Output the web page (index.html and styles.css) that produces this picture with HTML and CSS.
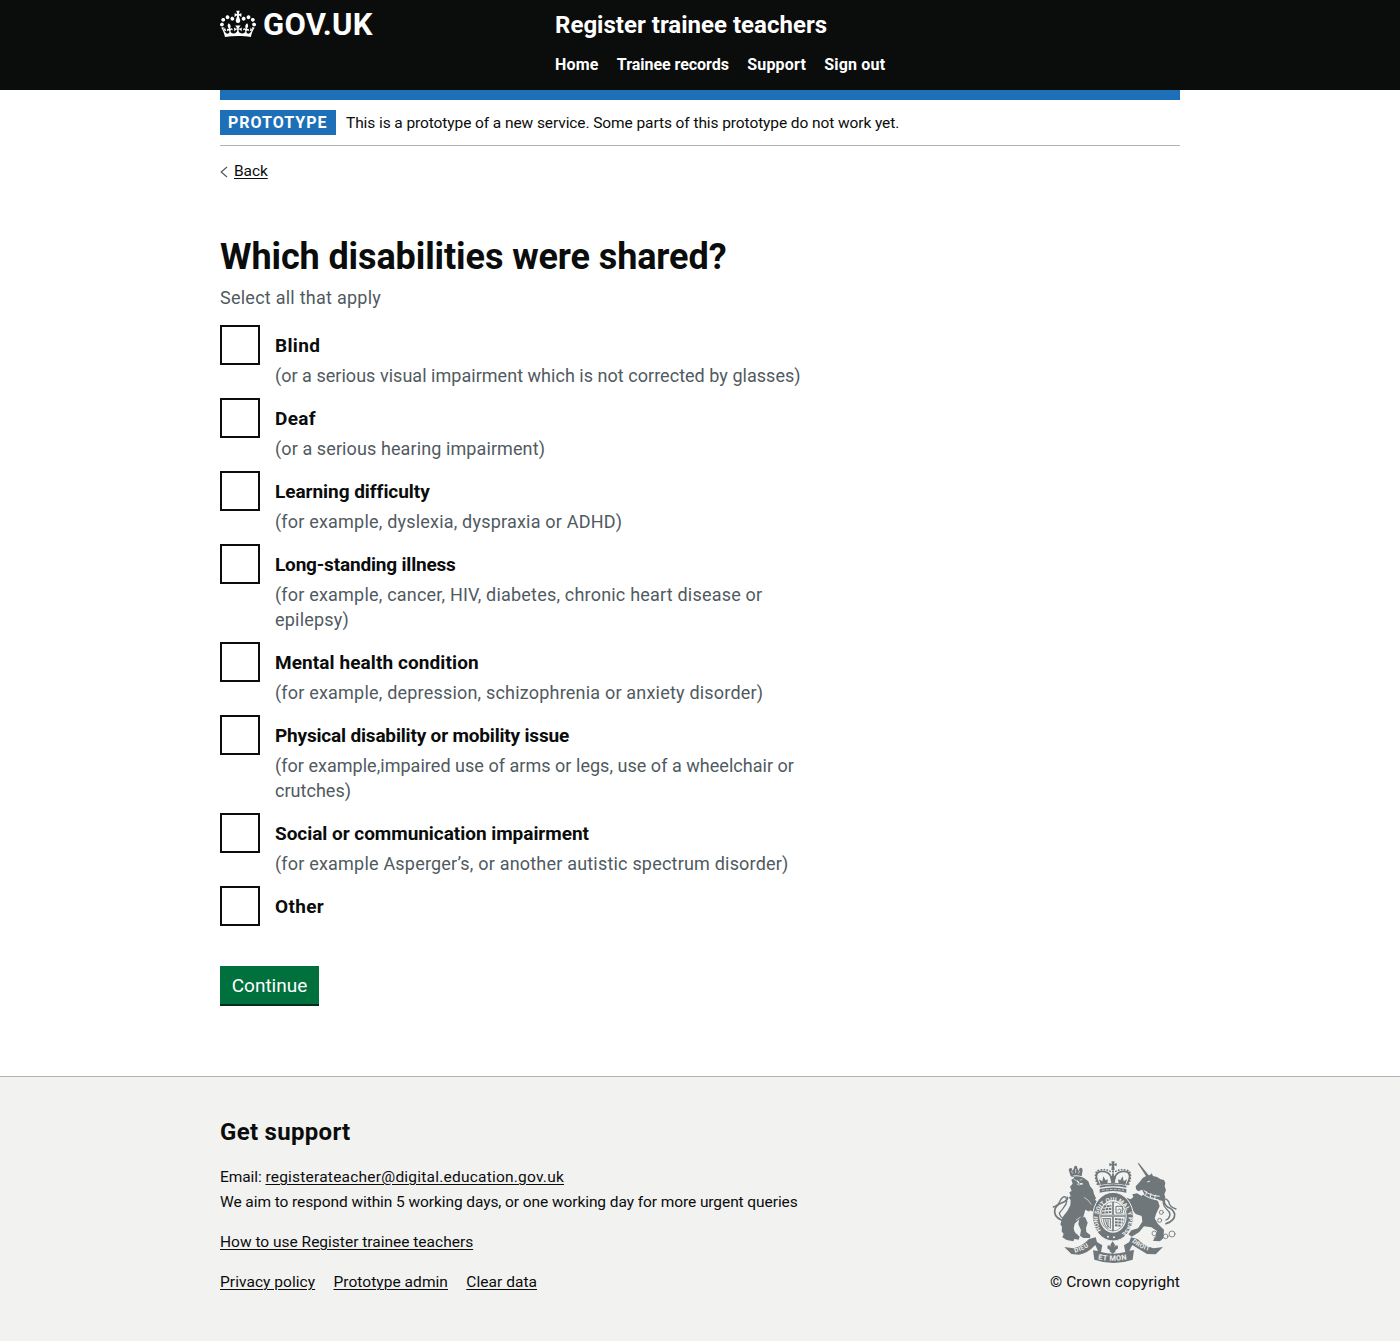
FILE: index.html
```html
<!DOCTYPE html>
<html lang="en">
<head>
<meta charset="utf-8">
<title>Which disabilities were shared? - Register trainee teachers - GOV.UK</title>
<link rel="stylesheet" href="styles.css">
</head>
<body>
<header class="header">
  <div class="width header-inner">
    <a class="logo" href="#">
      <svg class="crown" viewBox="0 0 132 97" width="36" height="30" aria-hidden="true"><path fill="currentColor" fill-rule="evenodd" d="M25 30.2c3.5 1.5 7.7-.2 9.1-3.7 1.5-3.6-.2-7.8-3.9-9.2-3.6-1.4-7.6.3-9.1 3.9-1.4 3.5.3 7.5 3.9 9zM9 39.5c3.6 1.5 7.8-.2 9.2-3.7 1.5-3.6-.2-7.8-3.9-9.1-3.6-1.5-7.6.2-9.1 3.8-1.4 3.5.3 7.5 3.8 9zM4.4 57.2c3.5 1.5 7.7-.2 9.1-3.8 1.5-3.6-.2-7.7-3.9-9.1-3.5-1.5-7.6.3-9.1 3.8-1.4 3.5.3 7.6 3.9 9.1zm38.3-21.4c3.5 1.5 7.7-.2 9.1-3.8 1.5-3.6-.2-7.7-3.9-9.1-3.6-1.5-7.6.3-9.1 3.8-1.3 3.6.4 7.7 3.9 9.1zm64.4-5.6c-3.6 1.5-7.8-.2-9.1-3.7-1.5-3.6.2-7.8 3.8-9.2 3.6-1.4 7.7.3 9.2 3.9 1.3 3.5-.4 7.5-3.9 9zm15.9 9.3c-3.6 1.5-7.7-.2-9.1-3.7-1.5-3.6.2-7.8 3.7-9.1 3.6-1.5 7.7.2 9.2 3.8 1.5 3.5-.3 7.5-3.8 9zm4.7 17.7c-3.6 1.5-7.8-.2-9.2-3.8-1.5-3.6.2-7.7 3.9-9.1 3.6-1.5 7.7.3 9.2 3.8 1.3 3.5-.4 7.6-3.9 9.1zM89.3 35.8c-3.6 1.5-7.8-.2-9.2-3.8-1.4-3.6.2-7.7 3.9-9.1 3.6-1.5 7.7.3 9.2 3.8 1.4 3.6-.3 7.7-3.9 9.1zM69.7 17.7l8.9 4.7V9.3l-8.9 2.8c-.2-.3-.5-.6-.9-.9L72.4 0H59.6l3.5 11.2c-.3.3-.6.5-.9.9l-8.8-2.8v13.1l8.8-4.7c.3.3.6.7.9.9l-5 15.4v.1c-.2.8-.4 1.6-.4 2.4 0 4.1 3.1 7.5 7 8.1h.2c.3 0 .7.1 1 .1.4 0 .7 0 1-.1h.2c4-.6 7.1-4.1 7.1-8.1 0-.8-.1-1.7-.4-2.4V34l-5.1-15.4c.4-.2.7-.6 1-.9zM66 92.8c16.9 0 32.8 1.1 47.1 3.2 4-16.9 8.9-26.7 14-33.5l-9.6-3.4c1 4.9 1.1 7.2 0 10.2-1.5-1.4-3-4.3-4.2-8.7L108.6 76c2.8-2 5-3.2 7.5-3.3-4.4 9.4-10 11.9-13.6 11.2-4.3-.8-6.3-4.6-5.6-7.9 1-4.7 5.7-5.9 8-.5 4.3-8.7-3-11.4-7.6-8.8 7.1-7.2 7.9-13.5 2.1-21.1-8 6.1-8.1 12.3-4.5 20.8-4.7-5.4-12.1-2.5-9.5 6.2 3.4-5.2 7.9-2 7.2 3.1-.6 4.3-6.4 7.8-13.5 7.2-10.3-.9-10.9-8-11.2-13.8 2.5-.5 7.1 1.8 11 7.3L80.2 60c-4.1 4.4-8 5.3-12.3 5.4 1.4-4.4 8-11.6 8-11.6H55.5s6.4 7.2 7.9 11.6c-4.2-.1-8-1-12.3-5.4l1.4 16.4c3.9-5.5 8.5-7.7 10.9-7.3-.3 5.8-.9 12.8-11.1 13.8-7.2.6-12.9-2.9-13.5-7.2-.7-5 3.8-8.3 7.1-3.1 2.7-8.7-4.6-11.6-9.4-6.2 3.7-8.5 3.6-14.7-4.6-20.8-5.8 7.6-5 13.9 2.2 21.1-4.7-2.6-11.9.1-7.7 8.8 2.3-5.5 7.1-4.2 8.1.5.7 3.3-1.3 7.1-5.7 7.9-3.5.7-9-1.8-13.5-11.2 2.5.1 4.7 1.3 7.5 3.3l-4.7-15.4c-1.2 4.4-2.7 7.2-4.3 8.7-1.1-3-.9-5.3 0-10.2l-9.5 3.4c5 6.9 9.9 16.7 14 33.5 14.8-2.1 30.8-3.2 47.7-3.2z"/></svg>
      <span class="logo-text">GOV.UK</span>
    </a>
    <div class="header-content">
      <a class="service-name" href="#">Register trainee teachers</a>
      <nav class="nav">
        <a class="spaced" href="#">Home</a>
        <a href="#">Trainee records</a>
        <a class="spaced" href="#">Support</a>
        <a class="spaced" href="#">Sign out</a>
      </nav>
    </div>
  </div>
</header>

<div class="width">
  <div class="phase-banner">
    <strong class="tag">PROTOTYPE</strong>
    <span class="phase-text">This is a prototype of a new service. Some parts of this prototype do not work yet.</span>
  </div>
  <div class="back">
    <svg width="8" height="12" viewBox="0 0 8 12" aria-hidden="true"><path d="M7 1 1.2 6 7 11" fill="none" stroke="#505a5f" stroke-width="1.2"/></svg>
    <a href="#">Back</a>
  </div>

  <main class="main">
    <h1>Which disabilities were shared?</h1>
    <p class="select-hint">Select all that apply</p>
    <div class="options">
      <div class="option"><span class="box"></span><div class="option-text"><label class="loose">Blind</label><p class="tight">(or a serious visual impairment which is not corrected by glasses)</p></div></div>
      <div class="option"><span class="box"></span><div class="option-text"><label class="loose">Deaf</label><p class="medium">(or a serious hearing impairment)</p></div></div>
      <div class="option"><span class="box"></span><div class="option-text"><label>Learning difficulty</label><p>(for example, dyslexia, dyspraxia or ADHD)</p></div></div>
      <div class="option"><span class="box"></span><div class="option-text"><label class="tight">Long-standing illness</label><p>(for example, cancer, HIV, diabetes, chronic heart disease or epilepsy)</p></div></div>
      <div class="option"><span class="box"></span><div class="option-text"><label class="medium">Mental health condition</label><p>(for example, depression, schizophrenia or anxiety disorder)</p></div></div>
      <div class="option"><span class="box"></span><div class="option-text"><label class="tight">Physical disability or mobility issue</label><p class="tight">(for example,impaired use of arms or legs, use of a wheelchair or crutches)</p></div></div>
      <div class="option"><span class="box"></span><div class="option-text"><label>Social or communication impairment</label><p>(for example Asperger’s, or another autistic spectrum disorder)</p></div></div>
      <div class="option"><span class="box"></span><div class="option-text"><label class="loose">Other</label></div></div>
    </div>
    <button class="button" type="button">Continue</button>
  </main>
</div>

<footer class="footer">
  <div class="width footer-inner">
    <div class="footer-main">
      <h2>Get support</h2>
      <p>Email: <a class="email" href="#">registerateacher@digital.education.gov.uk</a><br>We aim to respond within 5 working days, or one working day for more urgent queries</p>
      <p><a class="guide" href="#">How to use Register trainee teachers</a></p>
      <p class="links"><a href="#">Privacy policy</a><a href="#">Prototype admin</a><a href="#">Clear data</a></p>
    </div>
    <div class="copyright">
      <svg class="crest" width="125" height="102" viewBox="36 30 375 306" aria-hidden="true">
        <defs>
          <path id="garter" d="M183 238A46 54 0 1 1 256 238L248 246"/>
          <path id="dieu" d="M105 305Q135 298 168 270"/>
          <path id="etmon" d="M174 325Q218 335 275 322"/>
          <path id="droit" d="M275 273Q305 299 350 303"/>
        </defs>
        <g fill="#6f777b">
          <!-- lion -->
          <path d="M92 76 86 56q2-7 9-4l3 8 4-9q0-7 5-7t5 7l4 9 3-9q7-3 9 5l-3 20q-17-6-33 0z"/>
          <path d="M93 79q17-6 34 0l8 4 10 8 5 14 9 11 3 13 6 13-3 4 8 8-12 18-11-5-2 15-12-6-6 22-14 8-12 12-3 14 3 11 15 14-3 9-13-2-3 7-20-4-13-8 4-10-6-8 1-14-5-7 7-22 14-18 9-17 1-15-6-9 6-3-4-12 7-4-5-13 8-9-4-12 8-5-3-11z"/>
          <path d="M118 200l17-2 8 17-5 16 1 12 12 9-1 9h-20l-10-7 3-17-8-17zM145 155l24 15-2 15-20-8z"/>
          <!-- unicorn -->
          <path d="M293 37l4 0 35 43-8 5zM330 72l5-5 4 8 12 3 11 7 10 2 4 9-2 10 4 12-5 12 3 9-7 11-10-2-45-17-8-15-11 5-7-6-1-9 12-13 9-12 10-6z"/>
          <path d="M312 128l42 22 5 16-10 21-5 15 10 17 18 17-2 26-10 9-22-2 8-9 5-20-17-11-22-3-15 18-22 13-10-7 9-12 20-6 13-20-2-17-18-6-12-15-3-12-13-7-14 3-5-8 19-10 13 5 8-7-3-8 14-3 14 8z"/>
          <!-- scroll -->
          <path d="M73 288l27 4q27-6 47-28l20-5 4 14 16 10-4 20q36 10 73 0l-4-20 16-10 5-14 19 5q23 23 49 28l28-4-22 22-26-1-44-27-9 17 14-2-4 29q-57 20-115 0l-4-28 15 2-8-18q-25 27-50 29l-22-2z"/>
        </g>
        <g fill="none" stroke="#6f777b" stroke-linecap="round" stroke-linejoin="round">
          <path d="M78 211Q46 204 44 184q-1-14 12-24l17-8q12-7 9-13" stroke-width="5"/>
          <path d="M40 168q15-4 20-18 8-16 17-12 8 15-5 30-6 9-14 18 2 12 14 18" stroke-width="4"/>
          <path d="M378 218q27-8 26-28-4-15-20-21-13-9-11-20" stroke-width="5"/>
          <path d="M408 174q-20-6-22-22-8-13-16-5-3 14 10 28 10 8 10 16-2 12-12 16" stroke-width="4"/>
          <g stroke-width="2.5"><circle cx="294" cy="182" r="6"/><circle cx="343" cy="247" r="7"/><circle cx="349" cy="263" r="6"/><circle cx="377" cy="256" r="7"/><circle cx="396" cy="249" r="9"/><circle cx="359" cy="208" r="6"/><circle cx="364" cy="184" r="6"/></g>
        </g>
        <!-- garter -->
        <ellipse cx="219" cy="197" rx="61" ry="73" fill="#6f777b" stroke="#f2f2f1" stroke-width="3"/>
        <ellipse cx="219" cy="196" rx="41" ry="49" fill="#f2f2f1"/>
        <!-- royal crown -->
        <path d="M170 100l-6-24h110l-6 24 0 28q-49-15-98 0z" fill="#f2f2f1"/>
        <g fill="#6f777b">
          <path d="M214 31h10l-2 8 8-3v10l-8-3 2 14h-10l2-14-8 3V36l8 3z"/>
          <path d="M179 104q40-9 80 0v6q-40-8-80 0zM179 114q40-9 80 0v11q-40-10-80 0z"/>
          <path d="m182 102-5-17 10 6 3-15 7 12 7-3-2 12 12-2-4-16 9-8 9 8-4 16 12 2-2-12 7 3 7-12 3 15 10-6-5 17q-37-7-74 0z"/>
        </g>
        <g fill="none" stroke="#6f777b">
          <path d="M178 102q-18-34 1-40 25-4 35 17M260 102q18-34-1-40-25-4-35 17" stroke-width="5"/>
          <path d="M172 100q-14-39 7-43 23-4 37 8M266 100q14-39-7-43-23-4-37 8" stroke-width="5" stroke-linecap="round" stroke-dasharray="1 8"/>
          <path d="M219 52v30" stroke-width="6" stroke-linecap="round" stroke-dasharray="1 8"/>
        </g>
        <!-- quartered arms -->
        <g stroke="#6f777b" fill="none" stroke-width="3">
          <ellipse cx="219" cy="196" rx="37" ry="44" stroke-width="2"/>
          <path d="M219 152v88M182 194h74" stroke-width="6"/>
          <path d="M191 167l23-3M187 176l27-3M186 185l28-2M225 204l25 2M225 214l23 1M225 223l17 1" stroke-width="6" stroke-dasharray="8 2"/>
          <path d="M228 166h19v20h-19zM233 178q6-8 10 0l-3 6M187 203h25M191 205q0 20 14 27M197 205q0 18 11 25M204 205v23M211 202v31"/>
        </g>
        <path d="M219 154v84M182 194h74" stroke="#d8dada" stroke-width="1.5"/>
        <!-- light details -->
        <g stroke="#f2f2f1" fill="none">
          <path d="M101 85l9 4M119 88l8-3M110 99l9 3 8-5M132 139l13 9 9 13M108 207l14-9M94 60l5 8M119 60l-4 8M107 54v12" stroke-width="2"/>
          <path d="M111 89l7 9M120 98l8 1" stroke-width="4"/>
          <path d="M322 93l8-3M311 118q18 16 48 18M307 128q20 16 49 19M320 121l-3 12M333 127l-2 13M346 131l-2 14" stroke-width="3"/>
          <path d="M186 118q32-5 66 0" stroke-width="2" stroke-dasharray="8 4"/>
        </g>
        <g fill="#f2f2f1"><circle cx="204" cy="257" r="3"/><circle cx="222" cy="259" r="3"/></g>
        <path fill="#6f777b" d="M218 271l7 10-3 9 3-6 8-1 1 9-9 7 3 1-10 9-10-9 3-1-9-7 1-9 8 1 3 6-3-9z"/>
        <g class="motto" fill="#f2f2f1">
          <text font-size="18"><textPath href="#garter" textLength="242">HONI SOIT QUI MAL Y PENSE</textPath></text>
          <text font-size="19" letter-spacing="1.5"><textPath href="#dieu">DIEU</textPath></text>
          <text font-size="22" letter-spacing="1.2"><textPath href="#etmon">ET MON</textPath></text>
          <text font-size="19" letter-spacing="1"><textPath href="#droit">DROIT</textPath></text>
        </g>
      </svg>
      <a href="#">© Crown copyright</a>
    </div>
  </div>
</footer>
</body>
</html>
```
FILE: styles.css
```css
* { box-sizing: border-box; }

body {
  margin: 0;
  color: #0b0c0c;
  background: #fff;
  font-family: Roboto, "Liberation Sans", sans-serif;
  font-size: 15.5px;
  line-height: 25px;
  letter-spacing: -0.08px;
}

a { color: inherit; text-decoration: underline; text-decoration-thickness: 1px; text-underline-offset: 2px; }
h1, h2, p { margin: 0; }

.width { width: 960px; margin: 0 auto; }

.header { height: 90px; color: #fff; background: #0b0c0c; }
.header a { text-decoration: none; }
.header-inner { display: flex; height: 100px; border-bottom: 10px solid #1d70b8; }
.logo { display: flex; width: 335px; height: 50px; align-items: center; gap: 7px; padding-bottom: 2px; }
.crown { display: block; }
.logo-text { padding-top: 2px; font-size: 31px; font-weight: 700; letter-spacing: 0.25px; line-height: 30px; }
.header-content { display: flex; flex-direction: column; padding-top: 10px; }
.service-name { font-size: 24px; font-weight: 700; line-height: 30px; letter-spacing: 0.02px; }
.nav { display: flex; gap: 18.3px; margin-top: 12px; font-size: 16px; font-weight: 700; letter-spacing: -0.04px; }
.nav .spaced { letter-spacing: 0.18px; }

.phase-banner { display: flex; align-items: flex-start; gap: 10px; height: 46px; margin-top: 10px; padding-top: 10px; border-bottom: 1px solid #b1b4b6; }
.tag { display: block; width: 116px; height: 25px; padding-left: 8px; color: #fff; background: #1d70b8; font-size: 16px; letter-spacing: 1px; }
.phase-text { padding-top: 1px; line-height: 24px; letter-spacing: -0.09px; }

.back { display: flex; align-items: center; gap: 6px; margin-top: 13px; line-height: 25px; }

.main { width: 630px; padding-top: 51px; }
h1 { font-size: 36px; font-weight: 700; line-height: 45px; letter-spacing: -0.1px; }
.select-hint { margin-top: 5px; color: #505a5f; font-size: 18px; letter-spacing: 0.25px; }
.options { display: flex; flex-direction: column; gap: 10px; margin-top: 15px; }
.option { display: flex; gap: 15px; padding-right: 15px; }
.box { flex: none; width: 40px; height: 40px; border: 2px solid #0b0c0c; }
.option-text { display: flex; flex-direction: column; }
.option-text label { height: 40px; font-size: 19px; font-weight: 700; line-height: 41px; letter-spacing: -0.04px; }
.option-text p { margin-top: -2px; color: #505a5f; font-size: 18px; letter-spacing: 0.2px; }
.option-text label.loose { letter-spacing: 0.35px; }
.option-text label.medium { letter-spacing: 0.09px; }
.option-text label.tight { letter-spacing: -0.18px; }
.option-text p.medium { letter-spacing: 0.1px; }
.option-text p.tight { letter-spacing: 0.03px; }
.button { display: block; width: 99px; height: 40px; margin-top: 40px; padding: 1px 0 0; border: 0; border-bottom: 2px solid #002d18; color: #fff; background: #00703c; font: 19px/37px Roboto, "Liberation Sans", sans-serif; letter-spacing: 0; }

.footer { height: 265px; margin-top: 70px; border-top: 1px solid #b1b4b6; background: #f2f2f1; }
.footer-inner { display: flex; justify-content: space-between; align-items: flex-end; padding-top: 40px; }
.footer-main { display: flex; flex-direction: column; gap: 15px; }
.footer h2 { margin-bottom: 3px; font-size: 24px; line-height: 30px; letter-spacing: 0.3px; }
.email { letter-spacing: 0.22px; }
.guide { letter-spacing: 0; }
.links { display: flex; gap: 18.3px; letter-spacing: 0.05px; }
.copyright { display: flex; flex-direction: column; align-items: flex-end; gap: 7px; letter-spacing: 0.1px; }
.copyright a { text-decoration: none; }
.crest { display: block; margin-right: 3px; }
.motto { font-family: Roboto, sans-serif; font-weight: 700; }
```
